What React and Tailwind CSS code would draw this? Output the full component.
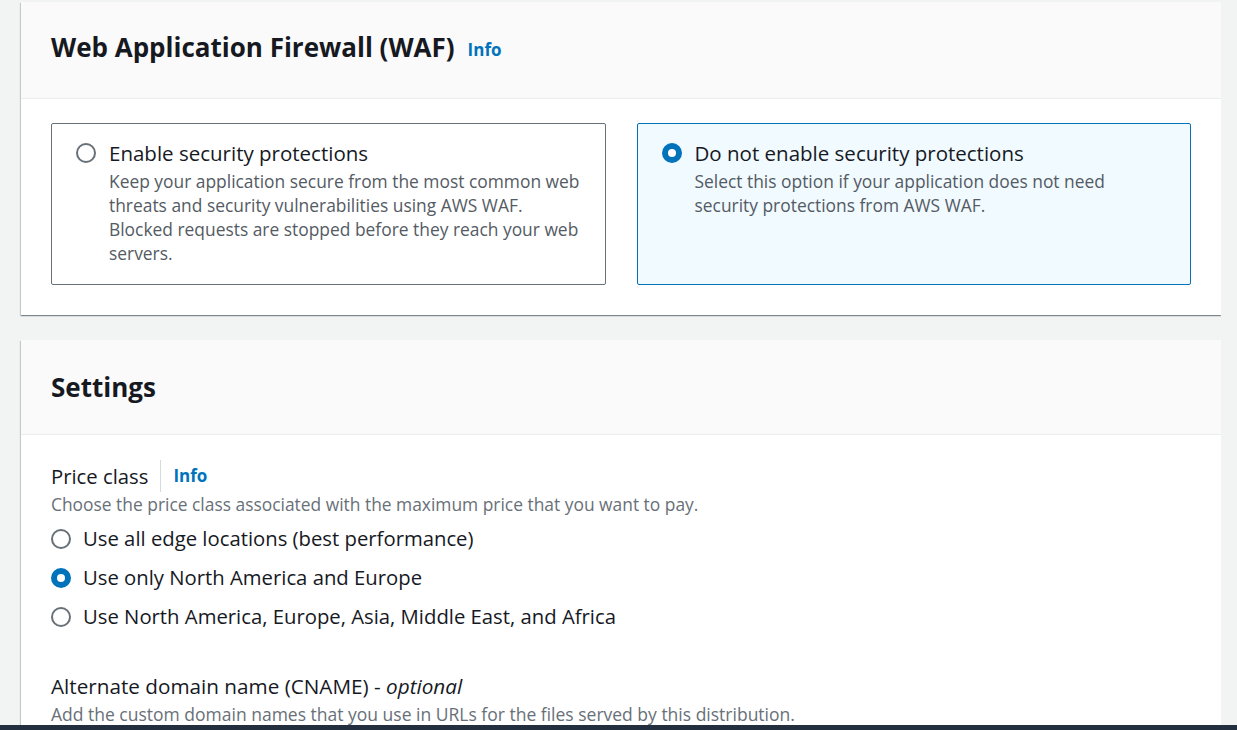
import { useState } from "react";

const cardShadow =
  "shadow-[0_1px_1px_0_rgba(0,28,36,0.3),1px_1px_1px_0_rgba(0,28,36,0.15),-1px_1px_1px_0_rgba(0,28,36,0.15)]";

function Radio({ checked }) {
  return (
    <span
      className={`w-[20px] h-[20px] shrink-0 rounded-full flex items-center justify-center ${
        checked ? "bg-[#0073bb]" : "border-2 border-[#687078] bg-white"
      }`}
    >
      {checked && <span className="w-[8px] h-[8px] rounded-full bg-white" />}
    </span>
  );
}

function WafOption({ checked, title, children, onClick }) {
  return (
    <div
      onClick={onClick}
      className={`cursor-pointer rounded-[2px] border px-[24px] pt-[15px] pb-[19px] ${
        checked ? "border-[#0073bb] bg-[#f1faff]" : "border-[#687078] bg-white"
      }`}
    >
      <div className="flex items-center gap-[13px]">
        <Radio checked={checked} />
        <span className="text-[20.5px] leading-[28px] text-[#16191f]">{title}</span>
      </div>
      <p className="pl-[33px] mt-[2px] text-[17.4px] leading-[24px] text-[#545b64]">
        {children}
      </p>
    </div>
  );
}

function PriceOption({ checked, label, onClick }) {
  return (
    <div onClick={onClick} className="flex items-center gap-[12px] h-[39px] cursor-pointer">
      <Radio checked={checked} />
      <span className="text-[20.3px] text-[#16191f]">{label}</span>
    </div>
  );
}

export default function App() {
  const [waf, setWaf] = useState("off");
  const [price, setPrice] = useState(1);

  const priceOptions = [
    "Use all edge locations (best performance)",
    "Use only North America and Europe",
    "Use North America, Europe, Asia, Middle East, and Africa",
  ];

  return (
    <div
      className="h-[730px] overflow-hidden bg-[#f2f3f3] flex flex-col"
      style={{ fontFamily: '"Open Sans", "Noto Sans", Arial, sans-serif' }}
    >
      <div className="flex-1 overflow-hidden pl-[21px] pt-[2px] w-[1221px] flex flex-col gap-[25px]">
        {/* WAF */}
        <section className={`bg-white ${cardShadow}`}>
          <div className="bg-[#fafafa] border-b border-[#eaeded] h-[97px] px-[30px] pb-[5px] flex items-center gap-[13px]">
            <h2 className="text-[26px] font-bold text-[#16191f]">
              Web Application Firewall (WAF)
            </h2>
            <a className="text-[17px] font-bold text-[#0073bb] mt-[4px]">Info</a>
          </div>
          <div className="px-[30px] pt-[24px] pb-[30px] grid grid-cols-2 gap-[31px]">
            <WafOption
              checked={waf === "on"}
              onClick={() => setWaf("on")}
              title="Enable security protections"
            >
              Keep your application secure from the most common web threats and security
              vulnerabilities using AWS WAF. Blocked requests are stopped before they reach your
              web servers.
            </WafOption>
            <WafOption
              checked={waf === "off"}
              onClick={() => setWaf("off")}
              title="Do not enable security protections"
            >
              Select this option if your application does not need security protections from AWS
              WAF.
            </WafOption>
          </div>
        </section>

        {/* Settings */}
        <section className={`bg-white flex-1 ${cardShadow}`}>
          <div className="bg-[#fafafa] border-b border-[#eaeded] h-[95px] px-[30px] flex items-center">
            <h2 className="text-[26px] font-bold text-[#16191f]">Settings</h2>
          </div>
          <div className="px-[30px] pt-[25px]">
            <div className="flex items-center h-[32px]">
              <span className="text-[20.3px] leading-[32px] text-[#16191f] pr-[12px] border-r border-[#d5dbdb]">
                Price class
              </span>
              <a className="pl-[12px] text-[17px] font-bold text-[#0073bb]">Info</a>
            </div>
            <p className="text-[17.4px] leading-[24px] text-[#687078]">
              Choose the price class associated with the maximum price that you want to pay.
            </p>
            <div className="mt-[3px]">
              {priceOptions.map((label, i) => (
                <PriceOption
                  key={label}
                  label={label}
                  checked={price === i}
                  onClick={() => setPrice(i)}
                />
              ))}
            </div>

            <div className="mt-[36px]">
              <div className="text-[20.7px] text-[#16191f] leading-[28px]">
                Alternate domain name (CNAME) - <i>optional</i>
              </div>
              <p className="mt-[2px] text-[17.5px] leading-[24px] text-[#687078]">
                Add the custom domain names that you use in URLs for the files served by this
                distribution.
              </p>
            </div>
          </div>
        </section>
      </div>
      <div className="h-[5px] bg-[#232f3e] shrink-0" />
    </div>
  );
}
